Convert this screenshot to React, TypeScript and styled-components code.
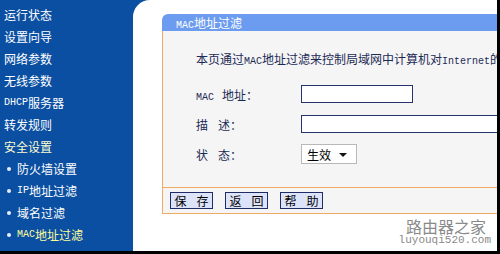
import React from "react";
import styled, { createGlobalStyle } from "styled-components";

const Global = createGlobalStyle`
  html, body { margin: 0; padding: 0; background: #fff; }
  body { font-family: "Noto Sans CJK SC", "Liberation Sans", sans-serif; }
`;

const Frame = styled.div`
  position: relative;
  width: 500px;
  height: 254px;
  box-sizing: border-box;
  display: flex;
  background: #0b4fa2;
  border-right: 3px solid #000;
  border-bottom: 3px solid #000;
  overflow: hidden;
`;

const Sidebar = styled.nav`
  width: 133px;
  flex: none;
  display: flex;
  flex-direction: column;
  padding-top: 4px;
`;

const MenuItem = styled.div<{ $sub?: boolean; $color?: string }>`
  height: 22px;
  line-height: 22px;
  display: flex;
  align-items: center;
  padding-left: ${(p) => (p.$sub ? "7px" : "4px")};
  font-size: 12px;
  color: ${(p) => p.$color || "#ffffff"};
  white-space: nowrap;
`;

const Bullet = styled.span`
  width: 4px;
  height: 4px;
  border-radius: 50%;
  background: #e8eefc;
  margin-right: 6px;
  flex: none;
`;

const Half = styled.span`
  font-family: "Liberation Mono", "DejaVu Sans Mono", monospace;
  font-size: 10px;
  white-space: pre;
`;

const Spacer = styled.span<{ $w: number }>`
  display: inline-block;
  width: ${(p) => p.$w}px;
`;

const Main = styled.main`
  flex: 1;
  min-width: 0;
  background: #fff;
  border-top-left-radius: 17px;
  padding: 14px 0 0 29px;
  overflow: hidden;
`;

const Panel = styled.section`
  width: 420px;
  display: flex;
  flex-direction: column;
`;

const PanelHeader = styled.header`
  height: 17px;
  background: #6b9cf0;
  border-top-left-radius: 6px;
  color: #fff;
  font-size: 12px;
  line-height: 17px;
  padding-left: 14px;
`;

const PanelBody = styled.div`
  background: #f5f5f5;
  border-left: 1px solid #f0aa64;
  border-bottom: 1px solid #f0aa64;
  display: flex;
  flex-direction: column;
  padding: 19px 0 0 33px;
  height: 157px;
  box-sizing: border-box;
`;

const Intro = styled.p`
  margin: 0 0 14px 0;
  font-size: 12px;
  line-height: 18px;
  color: #1c2a56;
  white-space: nowrap;
`;

const FieldRow = styled.div<{ $h: number; $mb: number }>`
  display: flex;
  align-items: center;
  height: ${(p) => p.$h}px;
  margin-bottom: ${(p) => p.$mb}px;
`;

const Label = styled.span`
  width: 105px;
  flex: none;
  font-size: 12px;
  color: #1c2a56;
  white-space: nowrap;
`;

const TextBox = styled.div<{ $w: number }>`
  width: ${(p) => p.$w}px;
  height: 18px;
  box-sizing: border-box;
  background: #fff;
  border: 1px solid #25346e;
  flex: none;
`;

const SelectBox = styled.div`
  width: 56px;
  height: 20px;
  box-sizing: border-box;
  background: #fff;
  border: 1px solid #b8b8b8;
  display: flex;
  align-items: center;
  justify-content: space-between;
  padding: 0 9px 0 5px;
  font-size: 12px;
  color: #000;
`;

const Arrow = styled.span`
  width: 0;
  height: 0;
  border-left: 4px solid transparent;
  border-right: 4px solid transparent;
  border-top: 4px solid #111;
  margin-top: 2px;
`;

const ButtonBar = styled.div`
  height: 26px;
  box-sizing: border-box;
  background: #f5f5f5;
  border-left: 1px solid #f0aa64;
  border-bottom: 1px solid #f0aa64;
  display: flex;
  align-items: center;
  gap: 12px;
  padding-left: 7px;
`;

const Button = styled.button`
  width: 43px;
  height: 17px;
  box-sizing: border-box;
  padding: 0;
  background: #dde4fa;
  border: 1px solid #1f2c68;
  font-family: "Noto Sans CJK SC", sans-serif;
  font-size: 12px;
  line-height: 15px;
  color: #000;
  display: flex;
  align-items: center;
  justify-content: center;
`;

const Watermark = styled.div`
  position: absolute;
  right: 6px;
  bottom: 4px;
  display: flex;
  flex-direction: column;
  align-items: flex-end;
  color: #8a8a8a;
`;

const WmTitle = styled.span`
  font-family: "Noto Sans CJK SC", sans-serif;
  font-size: 16px;
  line-height: 16px;
  padding-right: 5px;
`;

const WmUrl = styled.span`
  font-family: "Liberation Mono", monospace;
  font-size: 11px;
  line-height: 13px;
`;

export default function App() {
  return (
    <>
      <Global />
      <Frame>
        <Sidebar>
          <MenuItem>运行状态</MenuItem>
          <MenuItem>设置向导</MenuItem>
          <MenuItem>网络参数</MenuItem>
          <MenuItem>无线参数</MenuItem>
          <MenuItem>
            <Half>DHCP</Half>服务器
          </MenuItem>
          <MenuItem>转发规则</MenuItem>
          <MenuItem $color="#fdfdd0">安全设置</MenuItem>
          <MenuItem $sub>
            <Bullet />
            防火墙设置
          </MenuItem>
          <MenuItem $sub>
            <Bullet />
            <Half>IP</Half>地址过滤
          </MenuItem>
          <MenuItem $sub>
            <Bullet />
            域名过滤
          </MenuItem>
          <MenuItem $sub $color="#fdfd9a">
            <Bullet />
            <Half>MAC</Half>地址过滤
          </MenuItem>
          <MenuItem $sub>
            <Bullet />
            远端<Half>WEB</Half>管理
          </MenuItem>
        </Sidebar>
        <Main>
          <Panel>
            <PanelHeader>
              <Half>MAC</Half>地址过滤
            </PanelHeader>
            <PanelBody>
              <Intro>
                本页通过<Half>MAC</Half>地址过滤来控制局域网中计算机对<Half>Internet</Half>的访问。
              </Intro>
              <FieldRow $h={18} $mb={12}>
                <Label>
                  <Half>MAC </Half>
                  <Spacer $w={2} />地址：
                </Label>
                <TextBox $w={112} />
              </FieldRow>
              <FieldRow $h={18} $mb={11}>
                <Label>
                  描<Spacer $w={10} />述：
                </Label>
                <TextBox $w={260} />
              </FieldRow>
              <FieldRow $h={20} $mb={0}>
                <Label>
                  状<Spacer $w={10} />态：
                </Label>
                <SelectBox>
                  生效
                  <Arrow />
                </SelectBox>
              </FieldRow>
            </PanelBody>
            <ButtonBar>
              <Button>
                保<Spacer $w={10} />存
              </Button>
              <Button>
                返<Spacer $w={10} />回
              </Button>
              <Button>
                帮<Spacer $w={10} />助
              </Button>
            </ButtonBar>
          </Panel>
        </Main>
        <Watermark>
          <WmTitle>路由器之家</WmTitle>
          <WmUrl>luyouqi520.com</WmUrl>
        </Watermark>
      </Frame>
    </>
  );
}
